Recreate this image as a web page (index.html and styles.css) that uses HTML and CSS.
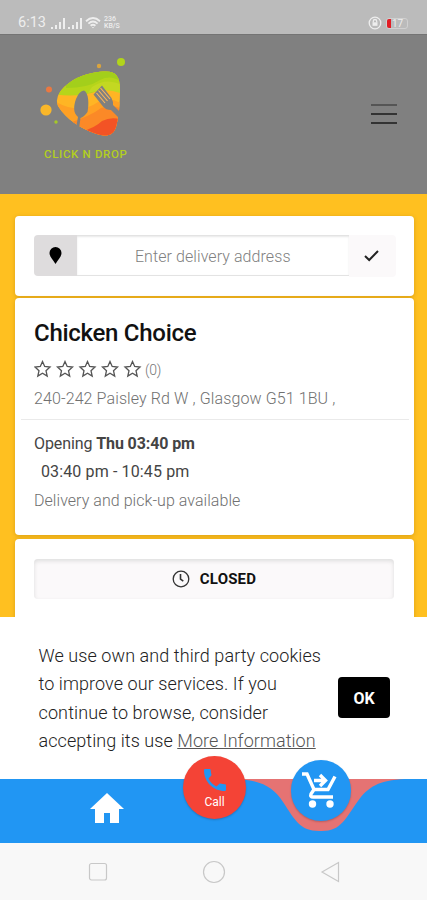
FILE: index.html
```html
<!DOCTYPE html>
<html lang="en">
<head>
<meta charset="utf-8">
<title>Click N Drop</title>
<link rel="stylesheet" href="styles.css">
</head>
<body>
<div class="status">
  <div class="status-left">
    <span class="clock">6:13</span>
    <svg width="14" height="11" viewBox="0 0 14 11" fill="#eee"><path d="M0 9h2v2H0zM4 7h2v4H4zM8 4h2v7H8zM12 0h2v11h-2z"/></svg>
    <svg width="14" height="11" viewBox="0 0 14 11" fill="#eee"><path d="M0 9h2v2H0zM4 7h2v4H4zM8 4h2v7H8zM12 0h2v11h-2z"/></svg>
    <svg class="wifi" width="16" height="12" viewBox="0 0 16 12" fill="none" stroke="#eee" stroke-width="1.9"><path d="M1 4.2Q8-2 15 4.2M3.4 6.6Q8 2.6 12.6 6.6M5.6 8.7Q8 6.7 10.4 8.7"/><path d="M6.8 10h2.4L8 11.3z" fill="#eee" stroke="none"/></svg>
    <span class="rate"><span>236</span><span>KB/S</span></span>
  </div>
  <div class="status-right">
    <svg width="14" height="14" viewBox="0 0 14 14" fill="none" stroke="#eee" stroke-width="1.3"><circle cx="7" cy="7" r="5.8"/><rect x="4.5" y="6.3" width="5" height="3.5" fill="#eee" stroke="none"/><path d="M5.3 6.5V5.2a1.7 1.7 0 0 1 3.4 0v1.3"/></svg>
    <span class="battery"><span class="charge"></span><span>17</span></span>
  </div>
</div>

<header class="header">
  <div class="brand">
    <svg width="90" height="84" viewBox="0 0 90 84">
      <defs><clipPath id="blob"><path d="M22 36C32 22 52 15.500 68 15.500C78 15.500 82 21 82 33C82 48 81 60 78 71C75 81 66 81 56 77C42 72 28 63 20 50Q17 43 22 36Z"/></clipPath></defs>
      <g clip-path="url(#blob)">
        <rect width="90" height="84" fill="#ffb524"/>
        <path d="M14 12H84V36Q72 31 60 35Q40 42 14 38Z" fill="#b6d51a"/>
        <path d="M28 32Q50 32 62 24Q74 18 84 27V12H28Z" fill="#a3cf1b"/>
        <path d="M54 31Q68 21 84 29V38Q70 31 50 37Z" fill="#c3d822"/>
        <path d="M18 46Q42 59 60 46Q72 40 84 48V82H20Z" fill="#ffa024"/>
        <path d="M28 68Q53 60 63 52Q75 48 84 53V82H30Z" fill="#fb8927"/>
        <path d="M42 76Q57 72 64 65Q74 60 84 64V82H42Z" fill="#f35325"/>
      </g>
      <path d="M38 72 40 61C35 57 35.500 50 38 43Q41 35 46 34.500C51 37 51 49 49.500 56Q46 61 42.500 62L41 73Z" fill="#808080"/>
      <path d="M55.500 38.500 64 29.500 73.500 42Q75.500 46 75 49L83 57V64L73 54Q68 54 65 50.500Z" fill="#808080"/>
      <path d="M58.500 37 67 47M60.500 34.500 69.500 45M62.500 32 72 43" stroke="#ffb75b" stroke-width="1.100"/>
      <circle cx="83" cy="6" r="4" fill="#b2d41b"/><circle cx="61" cy="10" r="2.200" fill="#dba43d"/><circle cx="11" cy="33.500" r="3" fill="#eb7840"/><circle cx="8" cy="54" r="5.600" fill="#fab729"/><circle cx="18" cy="66" r="1.700" fill="#a5c927"/>
    </svg>
    <div class="brand-name">CLICK N DROP</div>
  </div>
  <div class="menu"><i></i><i></i><i></i></div>
</header>

<main class="main">
  <section class="card search">
    <div class="pin"><svg width="13" height="17" viewBox="0 0 12 17"><path d="M6 0a6 6 0 0 1 6 6c0 3.500-3.500 7-6 11C3.500 13 0 9.500 0 6a6 6 0 0 1 6-6z"/></svg></div>
    <div class="field"><span>Enter delivery address</span></div>
    <div class="go"><svg width="15" height="12" viewBox="0 0 15 12" fill="none" stroke="#222" stroke-width="2"><path d="M1 6l4.200 4L14 1"/></svg></div>
  </section>

  <section class="card info">
    <h1>Chicken Choice</h1>
    <div class="rating">
      <svg width="108" height="18" viewBox="0 0 108 18" fill="none" stroke="#555" stroke-width="1.300">
        <defs><path id="star" d="M8.500 1.500l2.200 5 5.300.6-4 3.600 1.200 5.400-4.700-2.800-4.700 2.800L5 10.700 1 7.100l5.300-.6z"/></defs>
        <use href="#star"/><use href="#star" x="22.500"/><use href="#star" x="45"/><use href="#star" x="67.500"/><use href="#star" x="90"/>
      </svg>
      <span>(0)</span>
    </div>
    <div class="line address"><span>240-242 Paisley Rd W , Glasgow G51 1BU ,</span></div>
    <div class="rule"></div>
    <div class="line opening"><span>Opening <b>Thu 03:40 pm</b></span></div>
    <div class="line hours"><span>03:40 pm - 10:45 pm</span></div>
    <div class="line modes"><span>Delivery and pick-up available</span></div>
  </section>

  <section class="card state">
    <div class="closed">
      <svg width="18" height="18" viewBox="0 0 18 18" fill="none" stroke="#333" stroke-width="1.300"><circle cx="9" cy="9" r="7.800"/><path d="M8.500 4v5.200l2.800 2" stroke-width="1.600"/></svg>
      <b>CLOSED</b>
    </div>
  </section>
</main>

<section class="cookies">
  <p><span class="c1">We use own and third party cookies</span><br><span class="c2">to improve our services. If you</span><br><span class="c3">continue to browse, consider</span><br><span class="c4">accepting its use <a>More Information</a></span></p>
  <div class="ok">OK</div>
</section>

<nav class="tabs">
  <svg class="notch" width="170" height="54" viewBox="0 0 170 54"><path d="M0 0H170C144 1 133 8 123 22C110 40 106 52 87 52H84C65 52 60 41 48 23C38 8 26 1 0 0Z" fill="#e57373"/></svg>
  <svg class="home" width="34" height="30" viewBox="0 0 34 30" fill="#fff"><path d="M17 0 34 16H29V30H20V20H14V30H5V16H0Z"/></svg>
  <div class="call">
    <svg width="22" height="22" viewBox="3 3 18 18" fill="#2196f3"><path d="M6.620 10.790c1.440 2.830 3.760 5.140 6.590 6.590l2.200-2.200c.27-.27.67-.36 1.020-.24 1.120.37 2.330.57 3.570.57.550 0 1 .45 1 1V20c0 .55-.45 1-1 1C10.610 21 3 13.390 3 4c0-.55.45-1 1-1h3.500c.55 0 1 .45 1 1 0 1.250.2 2.450.57 3.570.11.35.03.74-.25 1.020z"/></svg>
    <span>Call</span>
  </div>
  <div class="cart"><svg width="36" height="37" viewBox="0 0 36 37" fill="none" stroke="#fff" stroke-width="3.400"><path d="M0 2H5L12 17.500H26L33 4.500M12 17.500 9 22Q8 25 11 25H31"/><path d="M12 8.500H22M18 3l5.500 5.500L18 14"/><g fill="#fff" stroke="none"><circle cx="10.500" cy="32" r="3.700"/><circle cx="28" cy="32" r="3.700"/></g></svg></div>
</nav>

<footer class="system">
  <svg width="20" height="20" viewBox="0 0 20 20"><rect x="1.500" y="1.500" width="17" height="16.500" rx="2"/></svg>
  <svg width="24" height="24" viewBox="0 0 24 24"><circle cx="12" cy="12" r="10.500"/></svg>
  <svg width="21" height="22" viewBox="0 0 21 22"><path d="M2 11 18.500 1.500V20.500Z"/></svg>
</footer>
</body>
</html>
```
FILE: styles.css
```css
* { box-sizing: border-box; }
body {
  margin: 0; width: 427px; height: 900px; overflow: hidden;
  display: flex; flex-direction: column;
  font-family: Roboto, "Liberation Sans", sans-serif; font-size: 16px; color: #444;
  background: #fff;
}
svg { display: block; flex: none; }
span, b { white-space: nowrap; }

.status { height: 34px; flex: none; background: #bbb; color: #eee; display: flex; justify-content: space-between; padding: 13px 19px 0 18px; }
.status-left, .status-right { display: flex; align-items: center; height: 20px; }
.clock { font-size: 14.500px; width: 33px; line-height: 20px; }
.status-left svg + svg { margin-left: 3px; }
.rate { display: flex; flex-direction: column; font-size: 7px; line-height: 7px; margin-left: 3px; font-weight: 500; }
.status-right { gap: 5px; }
.status-right svg { margin-right: -1px; }
.battery { width: 22px; height: 11px; border: 1px solid #d0d0d0; border-radius: 3px; display: flex; align-items: center; gap: 1px; font-size: 10px; overflow: hidden; }
.charge { width: 4px; height: 9px; background: #e21d25; }

.header { height: 160px; flex: none; background: #808080; border-top: 1px solid #747474; display: flex; justify-content: space-between; padding: 21px 30px 0 38px; }
.brand-name { color: #b2cf20; font-size: 11.500px; line-height: 14px; margin: 7px 0 0 6px; font-weight: 500; letter-spacing: .66px; white-space: nowrap; }
.menu { width: 26px; padding-top: 48px; display: flex; flex-direction: column; gap: 7px; }
.menu i { height: 2px; background: #333; }
.menu i:first-child { background: #555; }

.main { height: 423px; flex: none; overflow: hidden; background: #ffc020; padding: 21.500px 13px 0 14.500px; display: flex; flex-direction: column; }
.card { background: #fff; border-radius: 4px; box-shadow: 0 1px 4px rgba(130,90,0,.3); flex: none; }
.search { height: 80px; padding: 19.500px 18.500px 0 19.500px; display: flex; margin-bottom: 2.500px; }
.pin { width: 43px; height: 41px; background: #dedcdd; border-radius: 4px 0 0 4px; display: grid; place-items: center; }
.field { flex: 1; height: 41px; border: 1px solid #e3e3e3; border-left: 0; border-right: 0; box-shadow: inset 0 1px 2px #e8e8e8; display: flex; justify-content: center; line-height: 41px; color: #808080; font-weight: 300; letter-spacing: .08px; }
.go { width: 47px; height: 42px; padding-right: 2px; background: #fbf9fa; border-radius: 0 4px 4px 0; display: grid; place-items: center; }

.info { height: 237px; margin-bottom: 4px; }
h1 { margin: 0; padding: 20px 0 0 19.500px; height: 59px; font-size: 24px; line-height: 31px; font-weight: 500; letter-spacing: -.28px; color: #111; white-space: nowrap; }
.rating { display: flex; height: 26px; padding: 3px 0 0 19.500px; gap: 3px; font-size: 14px; line-height: 20px; color: #777; font-weight: 300; letter-spacing: -.3px; }
.line { height: 28.500px; line-height: 28.500px; padding-left: 19.500px; }
.address { height: 36px; line-height: 31px; color: #707070; font-weight: 300; letter-spacing: .11px; }
.rule { height: 1px; margin: 0 5px 9.500px 6px; background: #eaeaea; }
.opening { color: #444; letter-spacing: -.1px; }
.opening b { font-weight: 700; }
.hours { padding-left: 26.500px; letter-spacing: .13px; }
.modes { color: #707070; font-weight: 300; letter-spacing: .05px; }
.state { height: 110px; padding: 20px 20px 0 19.500px; }
.closed { height: 40px; background: #fbf9fa; border-radius: 4px; box-shadow: inset 0 2px 4px #ddd; display: flex; justify-content: center; align-items: center; gap: 10px; color: #111; font-size: 15px; letter-spacing: .2px; }

.cookies { height: 162px; flex: none; background: #fff; display: flex; justify-content: space-between; padding: 25px 37px 0 38.500px; }
.cookies p { margin: 0; font-size: 18px; line-height: 28.300px; font-weight: 300; color: #222; letter-spacing: .08px; }
.cookies .c3 { letter-spacing: .12px; }
.cookies .c4 { letter-spacing: .06px; }
.cookies a { color: #555; text-decoration: underline; }
.ok { width: 52px; height: 41px; margin-top: 35px; border-radius: 4px; background: #000; color: #fff; font-weight: 700; font-size: 16px; text-align: center; line-height: 43px; }

.tabs { height: 64px; flex: none; background: #2196f3; position: relative; }
.home { margin: 14px 0 0 90px; }
.notch { position: absolute; left: 235px; top: 0; }
.call { position: absolute; left: 183px; top: -23px; width: 63px; height: 63px; border-radius: 50%; background: #f44336; display: flex; flex-direction: column; align-items: center; padding-top: 13px; color: #fff; font-size: 12px; line-height: 17px; font-weight: 400; box-shadow: 0 1px 2px rgba(0,0,0,.2); }
.call span { margin-top: 3px; }
.cart { position: absolute; left: 290.500px; top: -19px; width: 60.500px; height: 60.500px; border-radius: 50%; background: #2196f3; padding: 12px 0 0 11px; box-shadow: 0 1px 2px rgba(0,0,0,.2); }

.system { height: 57px; flex: none; background: #f8f8f8; display: flex; justify-content: space-between; align-items: center; padding: 1px 86px 0 88px; }
.system svg { fill: none; stroke: #c8c8c8; stroke-width: 1.200; }
```
